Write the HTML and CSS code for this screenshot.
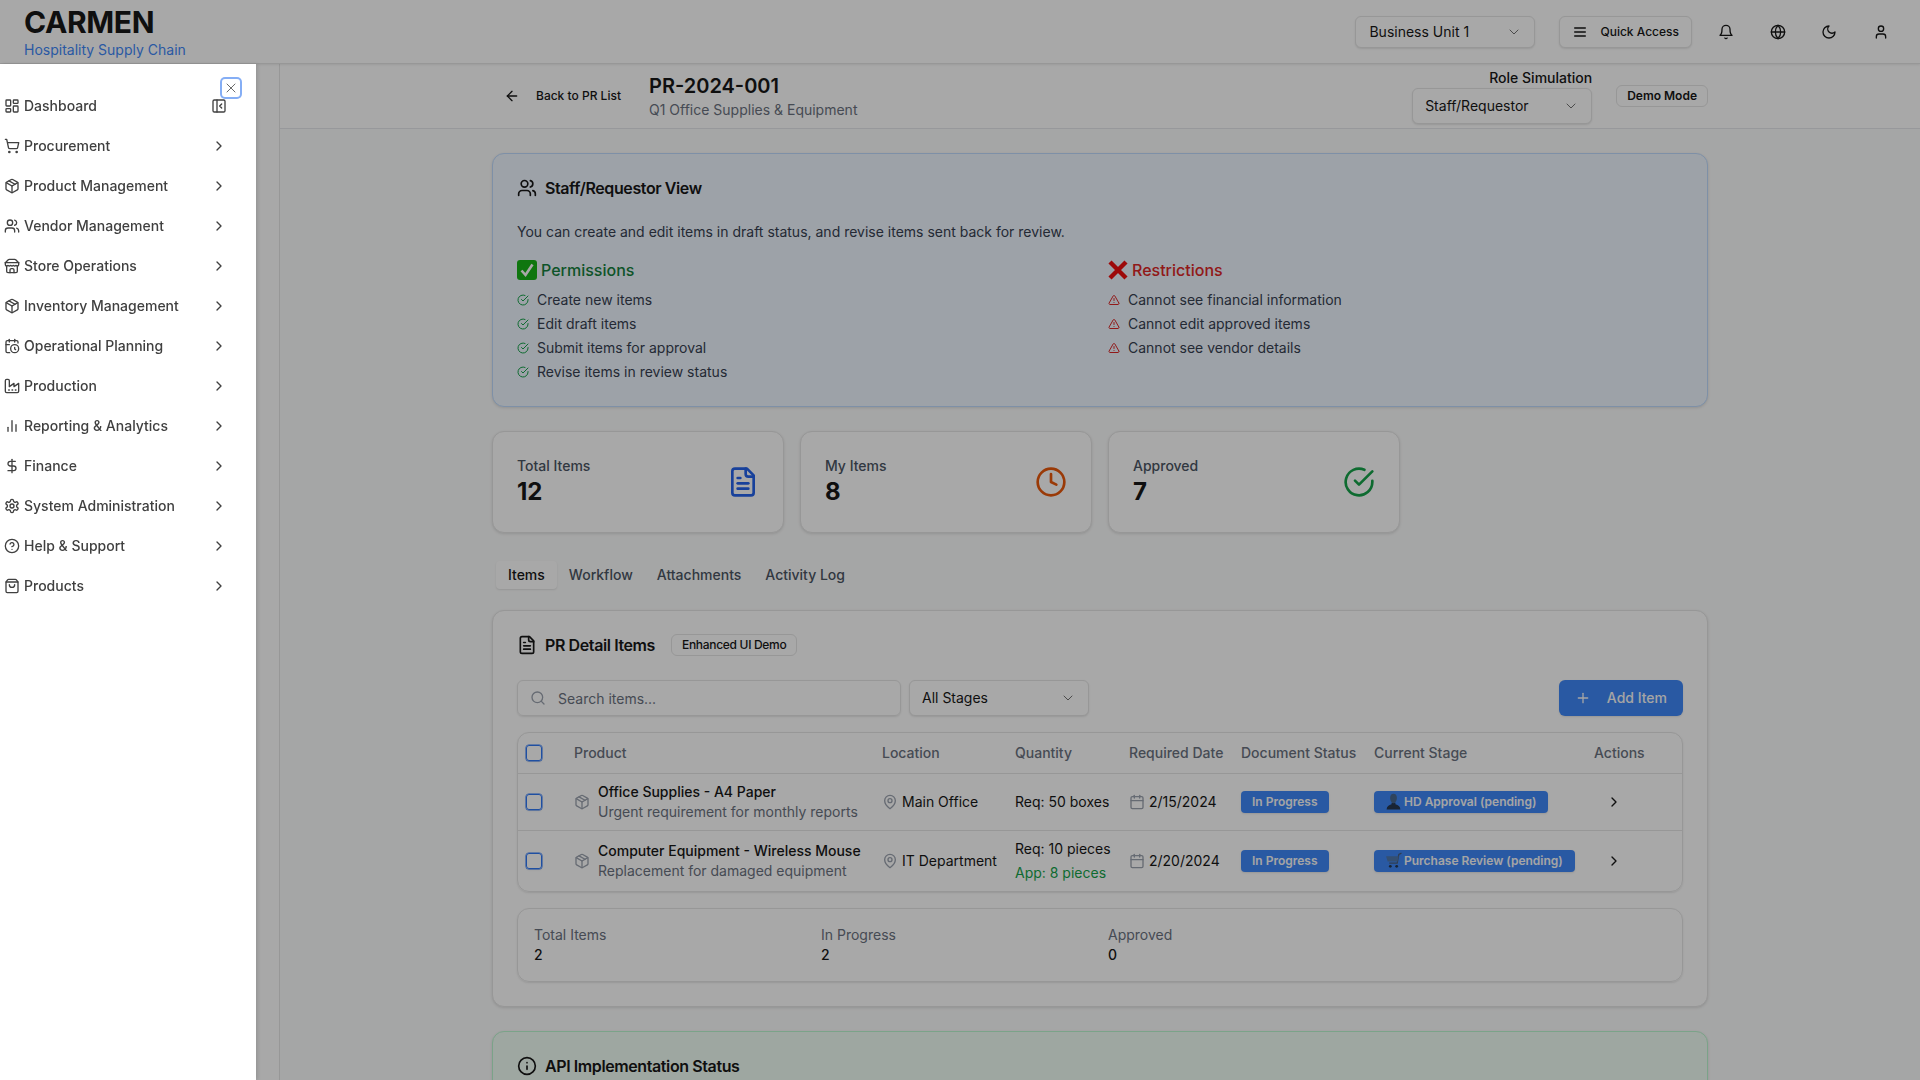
FILE: index.html
```html
<!DOCTYPE html>
<html lang="en">
<head>
<meta charset="utf-8">
<title>CARMEN - PR-2024-001</title>
<link rel="stylesheet" href="styles.css">
</head>
<body>
<svg class="sprite" xmlns="http://www.w3.org/2000/svg">
  <symbol id="i-dashboard" viewBox="0 0 24 24"><rect x="3" y="3" width="7" height="9" rx="1"/><rect x="14" y="3" width="7" height="5" rx="1"/><rect x="14" y="12" width="7" height="9" rx="1"/><rect x="3" y="16" width="7" height="5" rx="1"/></symbol>
  <symbol id="i-cart" viewBox="0 0 24 24"><circle cx="8" cy="21" r="1"/><circle cx="19" cy="21" r="1"/><path d="M2.05 2.05h2l2.66 12.42a2 2 0 0 0 2 1.58h9.78a2 2 0 0 0 1.95-1.57l1.65-7.43H5.12"/></symbol>
  <symbol id="i-package" viewBox="0 0 24 24"><path d="m7.5 4.27 9 5.15"/><path d="M21 8a2 2 0 0 0-1-1.73l-7-4a2 2 0 0 0-2 0l-7 4A2 2 0 0 0 3 8v8a2 2 0 0 0 1 1.73l7 4a2 2 0 0 0 2 0l7-4A2 2 0 0 0 21 16Z"/><path d="m3.3 7 8.7 5 8.7-5"/><path d="M12 22V12"/></symbol>
  <symbol id="i-users" viewBox="0 0 24 24"><path d="M16 21v-2a4 4 0 0 0-4-4H6a4 4 0 0 0-4 4v2"/><circle cx="9" cy="7" r="4"/><path d="M22 21v-2a4 4 0 0 0-3-3.87"/><path d="M16 3.13a4 4 0 0 1 0 7.75"/></symbol>
  <symbol id="i-store" viewBox="0 0 24 24"><path d="m2 7 4.41-4.41A2 2 0 0 1 7.83 2h8.34a2 2 0 0 1 1.42.59L22 7"/><path d="M4 12v8a2 2 0 0 0 2 2h12a2 2 0 0 0 2-2v-8"/><path d="M15 22v-4a2 2 0 0 0-2-2h-2a2 2 0 0 0-2 2v4"/><path d="M2 7h20"/><path d="M22 7v3a2 2 0 0 1-2 2a2.7 2.7 0 0 1-1.59-.63.7.7 0 0 0-.82 0A2.7 2.7 0 0 1 16 12a2.7 2.7 0 0 1-1.59-.63.7.7 0 0 0-.82 0A2.7 2.7 0 0 1 12 12a2.7 2.7 0 0 1-1.59-.63.7.7 0 0 0-.82 0A2.7 2.7 0 0 1 8 12a2.7 2.7 0 0 1-1.59-.63.7.7 0 0 0-.82 0A2.7 2.7 0 0 1 4 12a2 2 0 0 1-2-2V7"/></symbol>
  <symbol id="i-calclock" viewBox="0 0 24 24"><path d="M21 7.5V6a2 2 0 0 0-2-2H5a2 2 0 0 0-2 2v14a2 2 0 0 0 2 2h3.5"/><path d="M16 2v4"/><path d="M8 2v4"/><path d="M3 10h5"/><path d="M17.5 17.5 16 16.3V14"/><circle cx="16" cy="16" r="6"/></symbol>
  <symbol id="i-factory" viewBox="0 0 24 24"><path d="M2 20a2 2 0 0 0 2 2h16a2 2 0 0 0 2-2V8l-7 5V8l-7 5V4a2 2 0 0 0-2-2H4a2 2 0 0 0-2 2Z"/><path d="M17 18h1"/><path d="M12 18h1"/><path d="M7 18h1"/></symbol>
  <symbol id="i-bars" viewBox="0 0 24 24"><path d="M18 20V10"/><path d="M12 20V4"/><path d="M6 20v-6"/></symbol>
  <symbol id="i-dollar" viewBox="0 0 24 24"><path d="M12 2v20"/><path d="M17 5H9.5a3.5 3.5 0 0 0 0 7h5a3.5 3.5 0 0 1 0 7H6"/></symbol>
  <symbol id="i-settings" viewBox="0 0 24 24"><path d="M12.22 2h-.44a2 2 0 0 0-2 2v.18a2 2 0 0 1-1 1.73l-.43.25a2 2 0 0 1-2 0l-.15-.08a2 2 0 0 0-2.73.73l-.22.38a2 2 0 0 0 .73 2.73l.15.1a2 2 0 0 1 1 1.72v.51a2 2 0 0 1-1 1.74l-.15.09a2 2 0 0 0-.73 2.73l.22.38a2 2 0 0 0 2.73.73l.15-.08a2 2 0 0 1 2 0l.43.25a2 2 0 0 1 1 1.73V20a2 2 0 0 0 2 2h.44a2 2 0 0 0 2-2v-.18a2 2 0 0 1 1-1.73l.43-.25a2 2 0 0 1 2 0l.15.08a2 2 0 0 0 2.73-.73l.22-.39a2 2 0 0 0-.73-2.73l-.15-.08a2 2 0 0 1-1-1.74v-.5a2 2 0 0 1 1-1.74l.15-.09a2 2 0 0 0 .73-2.73l-.22-.38a2 2 0 0 0-2.73-.73l-.15.08a2 2 0 0 1-2 0l-.43-.25a2 2 0 0 1-1-1.73V4a2 2 0 0 0-2-2z"/><circle cx="12" cy="12" r="3"/></symbol>
  <symbol id="i-help" viewBox="0 0 24 24"><circle cx="12" cy="12" r="10"/><path d="M9.09 9a3 3 0 0 1 5.83 1c0 2-3 3-3 3"/><path d="M12 17h.01"/></symbol>
  <symbol id="i-bag" viewBox="0 0 24 24"><path d="M16 10a4 4 0 0 1-8 0"/><path d="M3.103 6.034h17.794"/><path d="M3.4 5.467a2 2 0 0 0-.4 1.2V20a2 2 0 0 0 2 2h14a2 2 0 0 0 2-2V6.667a2 2 0 0 0-.4-1.2l-2-2.667A2 2 0 0 0 17 2H7a2 2 0 0 0-1.6.8z"/></symbol>
  <symbol id="i-right" viewBox="0 0 24 24"><path d="m9 18 6-6-6-6"/></symbol>
  <symbol id="i-down" viewBox="0 0 24 24"><path d="m6 9 6 6 6-6"/></symbol>
  <symbol id="i-x" viewBox="0 0 24 24"><path d="M18 6 6 18"/><path d="m6 6 12 12"/></symbol>
  <symbol id="i-panel" viewBox="0 0 24 24"><rect x="3" y="3" width="18" height="18" rx="2"/><path d="M9 3v18"/><path d="m16 15-3-3 3-3"/></symbol>
  <symbol id="i-menu" viewBox="0 0 24 24"><path d="M4 6h16"/><path d="M4 12h16"/><path d="M4 18h16"/></symbol>
  <symbol id="i-bell" viewBox="0 0 24 24"><path d="M6 8a6 6 0 0 1 12 0c0 7 3 9 3 9H3s3-2 3-9"/><path d="M10.3 21a1.94 1.94 0 0 0 3.4 0"/></symbol>
  <symbol id="i-globe" viewBox="0 0 24 24"><circle cx="12" cy="12" r="10"/><path d="M12 2a14.5 14.5 0 0 0 0 20 14.5 14.5 0 0 0 0-20"/><path d="M2 12h20"/></symbol>
  <symbol id="i-moon" viewBox="0 0 24 24"><path d="M12 3a6 6 0 0 0 9 9 9 9 0 1 1-9-9Z"/></symbol>
  <symbol id="i-user" viewBox="0 0 24 24"><path d="M19 21v-2a4 4 0 0 0-4-4H9a4 4 0 0 0-4 4v2"/><circle cx="12" cy="7" r="4"/></symbol>
  <symbol id="i-back" viewBox="0 0 24 24"><path d="m12 19-7-7 7-7"/><path d="M19 12H5"/></symbol>
  <symbol id="i-check" viewBox="0 0 24 24"><path d="M22 11.08V12a10 10 0 1 1-5.93-9.14"/><path d="m9 11 3 3L22 4"/></symbol>
  <symbol id="i-alert" viewBox="0 0 24 24"><path d="m21.73 18-8-14a2 2 0 0 0-3.48 0l-8 14A2 2 0 0 0 4 21h16a2 2 0 0 0 1.73-3"/><path d="M12 9v4"/><path d="M12 17h.01"/></symbol>
  <symbol id="i-file" viewBox="0 0 24 24"><path d="M15 2H6a2 2 0 0 0-2 2v16a2 2 0 0 0 2 2h12a2 2 0 0 0 2-2V7Z"/><path d="M14 2v4a2 2 0 0 0 2 2h4"/><path d="M10 9H8"/><path d="M16 13H8"/><path d="M16 17H8"/></symbol>
  <symbol id="i-clock" viewBox="0 0 24 24"><circle cx="12" cy="12" r="10"/><path d="M12 6v6l4 2"/></symbol>
  <symbol id="i-pin" viewBox="0 0 24 24"><path d="M20 10c0 6-8 12-8 12s-8-6-8-12a8 8 0 0 1 16 0Z"/><circle cx="12" cy="10" r="3"/></symbol>
  <symbol id="i-calendar" viewBox="0 0 24 24"><rect x="3" y="4" width="18" height="18" rx="2"/><path d="M16 2v4"/><path d="M8 2v4"/><path d="M3 10h18"/></symbol>
  <symbol id="i-info" viewBox="0 0 24 24"><circle cx="12" cy="12" r="10"/><path d="M12 16v-4"/><path d="M12 8h.01"/></symbol>
  <symbol id="i-search" viewBox="0 0 24 24"><circle cx="11" cy="11" r="8"/><path d="m21 21-4.3-4.3"/></symbol>
  <symbol id="i-plus" viewBox="0 0 24 24"><path d="M5 12h14"/><path d="M12 5v14"/></symbol>
</svg>

<header class="topbar">
  <div class="brand">
    <div class="brand-name">CARMEN</div>
    <div class="brand-sub">Hospitality Supply Chain</div>
  </div>
  <div class="top-actions">
    <div class="select select-bu"><span>Business Unit 1</span><svg class="ic ic-16 muted thin"><use href="#i-down"/></svg></div>
    <button class="btn-outline"><svg class="ic ic-16"><use href="#i-menu"/></svg><span>Quick Access</span></button>
    <div class="icon-btns">
      <span class="icon-btn"><svg class="ic ic-16"><use href="#i-bell"/></svg></span>
      <span class="icon-btn"><svg class="ic ic-16"><use href="#i-globe"/></svg></span>
      <span class="icon-btn"><svg class="ic ic-16"><use href="#i-moon"/></svg></span>
      <span class="icon-btn"><svg class="ic ic-16"><use href="#i-user"/></svg></span>
    </div>
  </div>
</header>

<div class="shell">
  <div class="side-slot"></div>
  <main class="main">
    <div class="subbar">
      <div class="subbar-in">
        <a class="back"><svg class="ic ic-16"><use href="#i-back"/></svg><span>Back to PR List</span></a>
        <div class="titles">
          <h1>PR-2024-001</h1>
          <p>Q1 Office Supplies &amp; Equipment</p>
        </div>
        <div class="role-sim">
          <div class="role-label">Role Simulation</div>
          <div class="select select-role"><span>Staff/Requestor</span><svg class="ic ic-16 muted thin"><use href="#i-down"/></svg></div>
        </div>
        <span class="badge-outline demo">Demo Mode</span>
      </div>
    </div>

    <div class="content">
      <section class="card role-card">
        <div class="card-head"><svg class="ic ic-20"><use href="#i-users"/></svg><h2>Staff/Requestor View</h2></div>
        <p class="role-desc">You can create and edit items in draft status, and revise items sent back for review.</p>
        <div class="role-cols">
          <div>
            <h3 class="perm">
              <svg class="emoji" viewBox="0 0 20 20"><rect width="20" height="20" rx="3" fill="#18b418"/><path d="M4.5 10.5 8.500 15 15.500 4.500" fill="none" stroke="#fff" stroke-width="2.600"/></svg>
              Permissions</h3>
            <ul class="rules">
              <li><svg class="ic ic-12 green"><use href="#i-check"/></svg>Create new items</li>
              <li><svg class="ic ic-12 green"><use href="#i-check"/></svg>Edit draft items</li>
              <li><svg class="ic ic-12 green"><use href="#i-check"/></svg>Submit items for approval</li>
              <li><svg class="ic ic-12 green"><use href="#i-check"/></svg>Revise items in review status</li>
            </ul>
          </div>
          <div>
            <h3 class="restr">
              <svg class="emoji" viewBox="0 0 20 20"><path d="M2 2 18 18M18 2 2 18" fill="none" stroke="#ee0f0f" stroke-width="4.400"/></svg>
              Restrictions</h3>
            <ul class="rules">
              <li><svg class="ic ic-12 red"><use href="#i-alert"/></svg>Cannot see financial information</li>
              <li><svg class="ic ic-12 red"><use href="#i-alert"/></svg>Cannot edit approved items</li>
              <li><svg class="ic ic-12 red"><use href="#i-alert"/></svg>Cannot see vendor details</li>
            </ul>
          </div>
        </div>
      </section>

      <section class="stats">
        <div class="card stat"><div><div class="stat-label">Total Items</div><div class="stat-value">12</div></div><svg class="ic ic-32 c-blue"><use href="#i-file"/></svg></div>
        <div class="card stat"><div><div class="stat-label">My Items</div><div class="stat-value">8</div></div><svg class="ic ic-32 c-orange"><use href="#i-clock"/></svg></div>
        <div class="card stat"><div><div class="stat-label">Approved</div><div class="stat-value">7</div></div><svg class="ic ic-32 c-green"><use href="#i-check"/></svg></div>
      </section>

      <nav class="tabs">
        <span class="tab active">Items</span>
        <span class="tab">Workflow</span>
        <span class="tab">Attachments</span>
        <span class="tab">Activity Log</span>
      </nav>

      <section class="card items-card">
        <div class="items-head">
          <svg class="ic ic-20"><use href="#i-file"/></svg>
          <h2>PR Detail Items</h2>
          <span class="badge-outline enhanced">Enhanced UI Demo</span>
        </div>
        <div class="toolbar">
          <div class="search"><svg class="ic ic-16 faint"><use href="#i-search"/></svg><span>Search items...</span></div>
          <div class="select select-stage"><span>All Stages</span><svg class="ic ic-16 muted thin"><use href="#i-down"/></svg></div>
          <button class="btn-primary"><svg class="ic ic-16"><use href="#i-plus"/></svg><span>Add Item</span></button>
        </div>
        <div class="table-wrap">
          <table class="items">
            <colgroup><col class="c1"><col class="c2"><col class="c3"><col class="c4"><col class="c5"><col class="c6"><col class="c7"><col class="c8"></colgroup>
            <thead>
              <tr><th class="cb-cell"><span class="cb"></span></th><th>Product</th><th>Location</th><th>Quantity</th><th>Required Date</th><th>Document Status</th><th>Current Stage</th><th>Actions</th></tr>
            </thead>
            <tbody>
              <tr>
                <td class="cb-cell"><span class="cb"></span></td>
                <td><div class="prod"><svg class="ic ic-16 faint"><use href="#i-package"/></svg><div><div class="prod-name">Office Supplies - A4 Paper</div><div class="prod-note">Urgent requirement for monthly reports</div></div></div></td>
                <td><div class="iconed"><svg class="ic ic-16 faint"><use href="#i-pin"/></svg>Main Office</div></td>
                <td>Req: 50 boxes</td>
                <td><div class="iconed"><svg class="ic ic-16 faint"><use href="#i-calendar"/></svg>2/15/2024</div></td>
                <td><span class="pill">In Progress</span></td>
                <td><span class="pill stage"><svg class="em16" viewBox="0 0 16 16"><path d="M1.500 15.500c.3-3 2-4 4.700-4.800V9.200h3.600v1.500c2.700.8 4.400 1.800 4.700 4.800Z" fill="#26374f"/><path d="M8 .800c-2 0-3.200 1.500-3.200 3.800 0 2.200 1.400 5 3.200 5s3.200-2.800 3.200-5C11.200 2.300 10 .800 8 .800Z" fill="#48688f"/></svg>HD Approval (pending)</span></td>
                <td class="act"><svg class="ic ic-16"><use href="#i-right"/></svg></td>
              </tr>
              <tr>
                <td class="cb-cell"><span class="cb"></span></td>
                <td><div class="prod"><svg class="ic ic-16 faint"><use href="#i-package"/></svg><div><div class="prod-name">Computer Equipment - Wireless Mouse</div><div class="prod-note">Replacement for damaged equipment</div></div></div></td>
                <td><div class="iconed"><svg class="ic ic-16 faint"><use href="#i-pin"/></svg>IT Department</div></td>
                <td><div class="qty">Req: 10 pieces</div><div class="qty app">App: 8 pieces</div></td>
                <td><div class="iconed"><svg class="ic ic-16 faint"><use href="#i-calendar"/></svg>2/20/2024</div></td>
                <td><span class="pill">In Progress</span></td>
                <td><span class="pill stage"><svg class="em16" viewBox="0 0 16 16"><path d="M15.500 1 13 2.200l-1.500 8.300H4" fill="none" stroke="#4a5f7a" stroke-width="1.200"/><path d="M1 4h11.800l-1 5H2.500Z" fill="#4f78ad"/><circle cx="5" cy="13.500" r="1.300" fill="#26374f"/><circle cx="11" cy="13.500" r="1.300" fill="#26374f"/></svg>Purchase Review (pending)</span></td>
                <td class="act"><svg class="ic ic-16"><use href="#i-right"/></svg></td>
              </tr>
            </tbody>
          </table>
        </div>
        <div class="summary">
          <div><div class="sum-label">Total Items</div><div class="sum-value">2</div></div>
          <div><div class="sum-label">In Progress</div><div class="sum-value">2</div></div>
          <div><div class="sum-label">Approved</div><div class="sum-value">0</div></div>
        </div>
      </section>

      <section class="card api-card">
        <div class="card-head"><svg class="ic ic-20"><use href="#i-info"/></svg><h2>API Implementation Status</h2></div>
      </section>
    </div>
  </main>
</div>

<div class="scrim"></div>

<aside class="drawer">
  <button class="drawer-close"><svg class="ic ic-16 thin"><use href="#i-x"/></svg></button>
  <nav class="side-nav">
    <a class="side-item"><svg class="ic ic-16"><use href="#i-dashboard"/></svg><span>Dashboard</span><svg class="ic ic-16 end"><use href="#i-panel"/></svg></a>
    <a class="side-item"><svg class="ic ic-16"><use href="#i-cart"/></svg><span>Procurement</span><svg class="ic ic-16 end"><use href="#i-right"/></svg></a>
    <a class="side-item"><svg class="ic ic-16"><use href="#i-package"/></svg><span>Product Management</span><svg class="ic ic-16 end"><use href="#i-right"/></svg></a>
    <a class="side-item"><svg class="ic ic-16"><use href="#i-users"/></svg><span>Vendor Management</span><svg class="ic ic-16 end"><use href="#i-right"/></svg></a>
    <a class="side-item"><svg class="ic ic-16"><use href="#i-store"/></svg><span>Store Operations</span><svg class="ic ic-16 end"><use href="#i-right"/></svg></a>
    <a class="side-item"><svg class="ic ic-16"><use href="#i-package"/></svg><span>Inventory Management</span><svg class="ic ic-16 end"><use href="#i-right"/></svg></a>
    <a class="side-item"><svg class="ic ic-16"><use href="#i-calclock"/></svg><span>Operational Planning</span><svg class="ic ic-16 end"><use href="#i-right"/></svg></a>
    <a class="side-item"><svg class="ic ic-16"><use href="#i-factory"/></svg><span>Production</span><svg class="ic ic-16 end"><use href="#i-right"/></svg></a>
    <a class="side-item"><svg class="ic ic-16"><use href="#i-bars"/></svg><span>Reporting &amp; Analytics</span><svg class="ic ic-16 end"><use href="#i-right"/></svg></a>
    <a class="side-item"><svg class="ic ic-16"><use href="#i-dollar"/></svg><span>Finance</span><svg class="ic ic-16 end"><use href="#i-right"/></svg></a>
    <a class="side-item"><svg class="ic ic-16"><use href="#i-settings"/></svg><span>System Administration</span><svg class="ic ic-16 end"><use href="#i-right"/></svg></a>
    <a class="side-item"><svg class="ic ic-16"><use href="#i-help"/></svg><span>Help &amp; Support</span><svg class="ic ic-16 end"><use href="#i-right"/></svg></a>
    <a class="side-item"><svg class="ic ic-16"><use href="#i-bag"/></svg><span>Products</span><svg class="ic ic-16 end"><use href="#i-right"/></svg></a>
  </nav>
</aside>
</body>
</html>
```
FILE: styles.css
```css
* { box-sizing: border-box; }
html, body { margin: 0; height: 100%; overflow: hidden; }
body { font-family: Inter, "Liberation Sans", sans-serif; font-size: 14px; line-height: 20px; color: #171717; background: #fff; }
h1, h2, h3, p, ul { margin: 0; padding: 0; }
ul { list-style: none; }
button { font: inherit; color: inherit; background: none; border: 0; padding: 0; }
.sprite { position: absolute; width: 0; height: 0; }

.ic { fill: none; stroke: currentColor; stroke-width: 2; stroke-linecap: round; stroke-linejoin: round; flex: none; display: block; }
.thin { stroke-width: 1.5; }
.ic-12 { width: 12px; height: 12px; }
.ic-16 { width: 16px; height: 16px; }
.ic-20 { width: 20px; height: 20px; }
.ic-32 { width: 32px; height: 32px; }
.muted { color: #737373; }
.faint { color: #9ca3af; }
.green { color: #16a34a; }
.red { color: #dc2626; }
.c-blue { color: #2563eb; }
.c-orange { color: #ea580c; }
.c-green { color: #16a34a; }

/* top bar */
.topbar { height: 64px; display: flex; align-items: center; justify-content: space-between; padding: 0 19.5px 0 24px; border-bottom: 1px solid #e5e5e5; background: #fff; box-shadow: 0 1px 2px rgba(0,0,0,.08); position: relative; }
.brand-name { font-size: 30px; line-height: 36px; font-weight: 700; letter-spacing: -.4px; color: #171717; }
.brand-sub { font-size: 14px; line-height: 20px; color: #3f88f8; }
.top-actions { display: flex; align-items: center; }
.select { display: flex; align-items: center; justify-content: space-between; height: 36px; padding: 0 12px; border: 1px solid #e5e5e5; border-radius: 6px; background: #fff; box-shadow: 0 1px 2px rgba(0,0,0,.1); font-size: 14px; }
.select-bu { width: 180px; height: 32px; margin-right: 24px; padding-left: 13px; }
.select-role { width: 180px; }
.select-stage { width: 180px; }
.btn-outline { display: flex; align-items: center; gap: 12px; height: 32px; padding: 0 12px; border: 1px solid #e5e5e5; border-radius: 6px; background: #fff; box-shadow: 0 1px 2px rgba(0,0,0,.1); font-size: 12px; font-weight: 500; }
.icon-btns { display: flex; gap: 11.5px; margin-left: 14px; }
.icon-btn { width: 40px; height: 40px; display: flex; align-items: center; justify-content: center; }

/* shell */
.shell { display: flex; height: calc(100vh - 64px); }
.side-slot { width: 280px; flex: none; background: #fff; border-right: 1px solid #e5e5e5; }
.main { flex: 1; min-width: 0; background: #fbfcfc; overflow: hidden; }

.subbar { height: 65px; border-bottom: 1px solid #e5e7eb; background: #fff; }
.subbar-in { max-width: 1280px; height: 100%; margin: 0 auto; padding: 0 32px; display: flex; align-items: center; }
.back { display: flex; align-items: center; gap: 16px; padding: 0 12px; font-size: 12px; font-weight: 500; }
.titles { margin-left: 16px; }
.titles h1 { font-size: 20px; line-height: 28px; font-weight: 600; }
.titles p { color: #6b7280; }
.role-sim { margin-left: auto; display: flex; flex-direction: column; align-items: flex-end; }
.role-label { font-weight: 500; }
.badge-outline { display: inline-flex; align-items: center; height: 22px; padding: 0 10px; border: 1px solid #e5e5e5; border-radius: 6px; font-size: 12px; font-weight: 600; }
.demo { margin-left: 24px; }

.content { max-width: 1280px; margin: 0 auto; padding: 24px 32px; }
.card { background: #fff; border: 1px solid #e5e5e5; border-radius: 12px; box-shadow: 0 1px 3px rgba(0,0,0,.12); }

.role-card { height: 254px; padding: 23px 24px 24px; background: #eff6ff; border-color: #bfdbfe; }
.card-head { display: flex; align-items: center; gap: 8px; height: 22px; }
.card-head h2, .items-head h2 { font-size: 16px; line-height: 24px; font-weight: 600; letter-spacing: -.4px; }
.role-desc { margin-top: 23px; color: #374151; }
.role-cols { display: grid; grid-template-columns: 1fr 1fr; gap: 16px; margin-top: 16px; }
.role-cols h3 { display: flex; align-items: center; gap: 4px; font-size: 16px; line-height: 24px; font-weight: 500; }
.perm { color: #15803d; }
.restr { color: #dc2626; }
.emoji { width: 20px; height: 20px; flex: none; }
.rules { margin-top: 6px; }
.rules li { display: flex; align-items: center; gap: 8px; height: 24px; color: #374151; }

.stats { display: grid; grid-template-columns: repeat(4, 1fr); gap: 16px; margin-top: 24px; }
.stat { height: 102px; padding: 0 24px; display: flex; align-items: center; justify-content: space-between; }
.stat-label { font-weight: 500; color: #4b5563; }
.stat-value { font-size: 24px; line-height: 32px; font-weight: 700; }

.tabs { display: flex; height: 38px; padding: 5px 4px; margin-top: 23px; }
.tab { display: flex; align-items: center; height: 28px; padding: 0 12px; font-weight: 500; color: #4b5563; border-radius: 4px; }
.tab.active { color: #171717; background: #fff; box-shadow: 0 1px 2px rgba(0,0,0,.1); }

.items-card { margin-top: 16px; padding: 23px 24px 24px; height: 397px; }
.items-head { display: flex; align-items: center; height: 22px; }
.items-head h2 { margin-left: 8px; }
.enhanced { margin-left: 16px; font-weight: 500; letter-spacing: -.3px; }
.toolbar { display: flex; align-items: center; margin-top: 24px; gap: 8px; }
.search { width: 384px; height: 36px; display: flex; align-items: center; gap: 12px; padding: 0 12px; border: 1px solid #e5e5e5; border-radius: 6px; box-shadow: 0 1px 2px rgba(0,0,0,.1); color: #6b7280; }
.search span { margin-top: 1px; }
.btn-primary { margin-left: auto; display: flex; align-items: center; gap: 16px; height: 36px; padding: 0 16px; border-radius: 6px; background: #3f88f8; color: #fafafa; font-weight: 500; box-shadow: 0 1px 2px rgba(0,0,0,.1); }

.table-wrap { margin-top: 16px; border: 1px solid #e5e5e5; border-radius: 12px; box-shadow: 0 1px 2px rgba(0,0,0,.1); overflow: hidden; }
.items { width: 100%; border-collapse: collapse; table-layout: fixed; }
.c1 { width: 48px; } .c2 { width: 308px; } .c3 { width: 133px; } .c4 { width: 114px; }
.c5 { width: 112px; } .c6 { width: 133px; } .c7 { width: 220px; } .c8 { width: auto; }
.items th { height: 40px; padding: 0 8px; text-align: left; font-weight: 500; color: #6b7280; }
.items td { padding: 8px; vertical-align: middle; border-top: 1px solid #e5e5e5; white-space: nowrap; }
.items .cb-cell { padding: 0 0 0 8px; }
.cb { display: block; width: 16px; height: 16px; border: 1px solid #2f78f5; border-radius: 3px; box-shadow: 0 0 0 .5px #2f78f5, 0 1px 2px rgba(0,0,0,.1); }
.prod { display: flex; align-items: center; gap: 8px; }
.prod-name { font-weight: 500; }
.prod-note { color: #6b7280; }
.iconed { display: flex; align-items: center; gap: 4px; }
.app { color: #16a34a; margin-top: 4px; }
.pill { display: inline-flex; align-items: center; vertical-align: middle; height: 22px; padding: 0 11px; border-radius: 4px; background: #3f88f8; color: #fafafa; font-size: 12px; font-weight: 600; box-shadow: 0 1px 2px rgba(0,0,0,.1); }
.stage { gap: 2px; padding-right: 12px; }
.em16 { width: 17px; height: 17px; flex: none; }
.act svg { margin-left: 12px; }

.summary { margin-top: 16px; height: 74px; padding: 16px; border: 1px solid #e5e5e5; border-radius: 12px; box-shadow: 0 1px 2px rgba(0,0,0,.1); display: grid; grid-template-columns: repeat(4, 1fr); gap: 16px; }
.sum-label { color: #6b7280; }
.sum-value { font-weight: 500; }

.api-card { margin-top: 24px; padding: 23px 24px 24px; background: #f0fdf4; border-color: #bbf7d0; height: 200px; }

/* scrim and drawer */
.scrim { position: fixed; inset: 0; background: rgba(0,0,0,.34); }
.drawer { position: fixed; left: 0; top: 64px; bottom: 0; width: 256px; background: #fff; box-shadow: 2px 0 4px rgba(0,0,0,.12); }
.drawer-close { position: absolute; left: 222px; top: 15px; width: 18px; height: 18px; display: flex; align-items: center; justify-content: center; border-radius: 3px; box-shadow: 0 0 0 2px #85aef5; color: #6b6b6b; }
.side-nav { padding-top: 22px; }
.side-item { display: flex; align-items: center; gap: 4px; height: 40px; padding: 0 29px 0 4px; font-weight: 500; color: #404040; }
.side-item .end { margin-left: auto; }
```
